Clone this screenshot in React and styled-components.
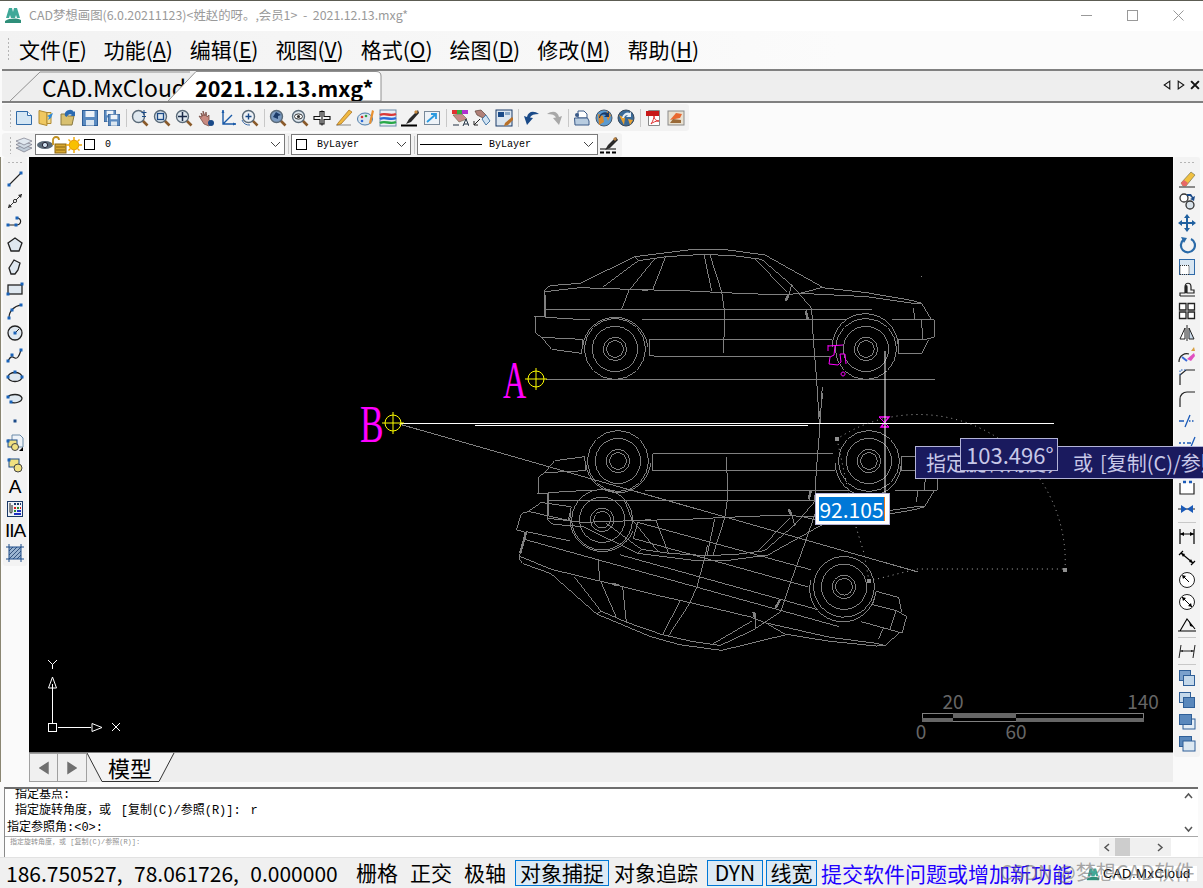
import styled, { createGlobalStyle } from 'styled-components';

const UI_FONT = '"Noto Sans CJK SC", "Noto Sans", sans-serif';
const CMD_FONT = '"Liberation Mono", "Noto Sans CJK SC", monospace';

const GlobalStyle = createGlobalStyle`
    html, body { margin: 0; padding: 0; background: #fafafa; }
`;

const Window = styled.div`
    position: relative;
    width: 1203px;
    height: 888px;
    overflow: hidden;
    display: flex;
    flex-direction: column;
    background: #fafafa;
    font-family: ${UI_FONT};
    color: #000;
    border-top: 1px solid #5c5c52;
    box-sizing: border-box;
`;

/* title bar */
const TitleBar = styled.div`
    height: 30px;
    flex: none;
    display: flex;
    align-items: center;
    box-sizing: border-box;
    background: #fff;
    padding: 0 2px 2px 4px;
`;
const TitleText = styled.span`
    margin-left: 7px;
    font-size: 12.4px;
    color: #9a9a9a;
    white-space: pre;
`;
const WinButtons = styled.div`
    margin-left: auto;
    display: flex;
`;
const WinButton = styled.div`
    width: 46px;
    height: 28px;
    display: flex;
    align-items: center;
    justify-content: center;
`;

/* menu */
const MenuBar = styled.div`
    height: 38px;
    flex: none;
    display: flex;
    align-items: center;
    gap: 17px;
    box-sizing: border-box;
    background: linear-gradient(90deg, #f2f2f2, #fbfbfb 70%);
    padding: 0 0 3px 7px;
`;
const Grip = styled.div`
    flex: none;
    width: 3px;
    height: ${p => p.$h || 18}px;
    margin-right: ${p => p.$mr || 0}px;
    background-image: radial-gradient(#b5b5b5 1px, transparent 1px);
    background-size: 3px 4px;
`;
const MenuItem = styled.span`
    font-size: 21px;
    line-height: 28px;
    white-space: nowrap;
`;

/* document tabs */
const TabStrip = styled.div`
    position: relative;
    height: 30px;
    flex: none;
    display: flex;
    align-items: flex-end;
    margin-left: 2px;
    background: #eeeeee;
    border-top: 2px solid #808080;
    border-bottom: 2px solid #808080;
`;
const DocTab = styled.div`
    position: relative;
    flex: none;
    width: ${p => p.$w}px;
    height: 30px;
    margin-left: ${p => p.$ml}px;
    padding-left: ${p => p.$pl}px;
    box-sizing: border-box;
    overflow: hidden;
    font-size: ${p => (p.$active ? 21.5 : 23)}px;
    font-weight: ${p => (p.$active ? 700 : 400)};
    line-height: 33px;
    white-space: nowrap;
    z-index: ${p => (p.$active ? 2 : 1)};
`;
const TabShape = styled.svg`
    position: absolute;
    left: 0;
    top: 0;
    z-index: -1;
`;
const TabNav = styled.div`
    position: absolute;
    right: 3px;
    top: 8px;
    display: flex;
    gap: 4px;
`;

/* horizontal toolbars */
const ToolRow = styled.div`
    height: ${p => p.$h}px;
    flex: none;
    display: flex;
    align-items: center;
    background: #fbfbfb;
    padding-left: 2px;
`;
const ToolBand = styled.div`
    height: ${p => p.$h}px;
    display: flex;
    align-items: center;
    padding: 0 2px 0 7px;
    background: #f2f2f2;
    border-radius: 3px;
`;
const Slot = styled.div`
    flex: none;
    width: 22px;
    height: 22px;
    display: flex;
    align-items: center;
    justify-content: center;
`;
const VSep = styled.div`
    flex: none;
    width: 1px;
    height: 18px;
    margin: 0 ${p => p.$m ?? 2.5}px;
    background: #c8c8c8;
`;
const Combo = styled.div`
    flex: none;
    width: ${p => p.$w}px;
    height: 21px;
    box-sizing: border-box;
    display: flex;
    align-items: center;
    background: #fff;
    border: 1px solid #7a7a7a;
    font-family: ${CMD_FONT};
    font-size: 10px;
    padding-left: ${p => p.$pl || 0}px;
`;
const Swatch = styled.div`
    flex: none;
    width: 9px;
    height: 9px;
    border: 1px solid #000;
    margin-left: ${p => p.$ml || 0}px;
    margin-right: ${p => p.$mr || 0}px;
`;
const LinePreview = styled.div`
    width: 62px;
    height: 1px;
    background: #000;
    margin-right: 7px;
`;
const Chevron = styled.svg`
    margin-left: auto;
    margin-right: 3px;
`;
const Tucked = styled.div`
    display: flex;
    margin-left: ${p => p.$ml}px;
`;

/* middle */
const Middle = styled.div`
    height: 625px;
    flex: none;
    display: flex;
`;
const LeftDock = styled.div`
    flex: none;
    width: 29px;
    padding-left: 2px;
    box-sizing: border-box;
    border-left: 1px solid #8a8672;
`;
const VBand = styled.div`
    width: ${p => p.$w}px;
    display: flex;
    flex-direction: column;
    align-items: center;
    padding: 4px 0 2px;
    background: #f3f3f3;
    border-radius: 3px;
`;
const HGrip = styled.div`
    flex: none;
    width: 16px;
    height: 3px;
    margin-bottom: 4px;
    background-image: radial-gradient(#b5b5b5 1px, transparent 1px);
    background-size: 4px 3px;
`;
const HSep = styled.div`
    flex: none;
    width: 18px;
    height: 1px;
    margin: 2px 0;
    background: #c8c8c8;
`;
const Center = styled.div`
    flex: 1;
    min-width: 0;
    display: flex;
    flex-direction: column;
`;
const Canvas = styled.svg`
    display: block;
    flex: none;
    background: #000;
    border-bottom: 1px solid #808080;
`;
const RightDock = styled.div`
    flex: none;
    width: 30px;
    padding-left: 1px;
    box-sizing: border-box;
`;
const ModelBar = styled.div`
    flex: 1;
    display: flex;
    background: #eeeeee;
`;
const PageBtn = styled.div`
    width: 29px;
    height: 29px;
    box-sizing: border-box;
    display: flex;
    align-items: center;
    justify-content: center;
    background: #f0f0f0;
    border: 1px solid #a0a0a0;
    border-left-width: ${p => (p.$first ? 1 : 0)}px;
`;
const ModelTab = styled.div`
    position: relative;
    z-index: 0;
    width: 88px;
    height: 29px;
    font-size: 22px;
    line-height: 29px;
    padding-left: 21px;
    box-sizing: border-box;
`;

/* overlays on the drawing */
const Tooltip = styled.div`
    position: absolute;
    left: 915px;
    top: 445px;
    width: 300px;
    height: 33px;
    box-sizing: border-box;
    padding-left: 10px;
    background: #1a1a5e;
    border: 1px solid #b4b4d8;
    color: #c8c8e8;
    font-size: 20px;
    line-height: 31px;
    word-spacing: 2.5px;
    white-space: pre;
    overflow: hidden;
`;
const AngleBox = styled(Tooltip)`
    left: 960px;
    top: 437px;
    width: 98px;
    height: 33px;
    padding-left: 5px;
    font-size: 22px;
`;
const DistBox = styled.div`
    position: absolute;
    left: 815px;
    top: 492px;
    width: 75px;
    height: 32px;
    box-sizing: border-box;
    padding: 3px 4px 3px 3px;
    background: #fff;
    border: 1px solid #b4b4d8;
`;
const DistSel = styled.div`
    height: 100%;
    background: #0078d7;
    border-right: 1px solid #e8761a;
    color: #fff;
    font-size: 21px;
    line-height: 24px;
    text-align: center;
`;

/* command window */
const Command = styled.div`
    height: 70px;
    flex: none;
    margin: 5px 5px 0 4px;
    display: flex;
    flex-direction: column;
    box-sizing: border-box;
    background: #fff;
    border-top: 2px solid #6e6e6e;
    border-left: 1px solid #8a8a8a;
`;
const CmdLog = styled.div`
    position: relative;
    height: 47px;
    flex: none;
    overflow: hidden;
    display: flex;
    flex-direction: column;
    justify-content: flex-end;
    padding-left: 2px;
    border-bottom: 1px solid #a8a8a8;
    font-family: ${CMD_FONT};
    font-size: 12px;
    word-spacing: 2.5px;
`;
const CmdLine = styled.div`
    flex: none;
    height: 16.5px;
    line-height: 16.5px;
    padding-left: ${p => p.$indent || 0}px;
    white-space: pre;
`;
const VScroll = styled.div`
    position: absolute;
    right: 1px;
    top: 0;
    height: 100%;
    width: 17px;
    display: flex;
    flex-direction: column;
    align-items: center;
    justify-content: space-between;
    padding: 3px 0;
    box-sizing: border-box;
`;
const CmdInput = styled.div`
    flex: 1;
    display: flex;
    justify-content: space-between;
    padding-left: 5px;
    font-family: ${CMD_FONT};
    font-size: 7px;
    line-height: 11px;
    color: #909090;
    white-space: pre;
`;
const HScroll = styled.div`
    width: 72px;
    height: 18px;
    margin: 1px 27px 0 0;
    display: flex;
    align-items: center;
    justify-content: space-between;
    padding: 0 7px 0 4px;
    box-sizing: border-box;
    background: #f0f0f0;
`;
const HThumb = styled.div`
    width: 15px;
    height: 18px;
    margin-left: 3px;
    margin-right: auto;
    background: #cdcdcd;
`;

/* status bar */
const StatusBar = styled.div`
    position: relative;
    flex: 1;
    display: flex;
    align-items: center;
    padding-left: 6px;
    background: #f0f0f0;
    border-top: 1px solid #e2e2e2;
    font-size: 21px;
    white-space: nowrap;
`;
const Coords = styled.div`
    width: 349px;
    flex: none;
    font-size: 21px;
    word-spacing: 1px;
    white-space: pre;
`;
const StatusBtn = styled.div`
    flex: none;
    height: 26px;
    box-sizing: border-box;
    width: ${p => p.$w}px;
    margin-right: ${p => p.$mr}px;
    text-align: center;
    line-height: 23px;
    border: 1px solid ${p => (p.$on ? '#0078d7' : 'transparent')};
    background: ${p => (p.$on ? '#dceaf5' : 'transparent')};
`;
const StatusLink = styled.span`
    color: #2200ff;
`;
const BrandBox = styled.div`
    position: absolute;
    left: 1083px;
    top: 8px;
    width: 114px;
    height: 15px;
    display: flex;
    align-items: center;
    gap: 3px;
    padding-left: 3px;
    box-sizing: border-box;
    background: #fff;
    font-family: "Liberation Sans", sans-serif;
    font-size: 13px;
    letter-spacing: 0.5px;
`;
const Watermark = styled.div`
    position: absolute;
    left: 1000px;
    top: -1px;
    font-size: 20px;
    color: rgba(110, 110, 110, 0.6);
`;

/* ---- small pictures ---- */
const BLUE = '#1a63b8';
const Node = ({ x, y }) => <rect x={x - 1.5} y={y - 1.5} width="3" height="3" fill={BLUE} />;
const Mag = ({ children, glass = '#dfe8ef' }) => (
    <>
        <path d="M10.5 10.5l6 6" stroke="#8a5a2a" strokeWidth="2.6" />
        <circle cx="7.5" cy="7.5" r="6" fill={glass} stroke="#5a6a78" strokeWidth="1.4" />
        {children}
    </>
);
const Floppy = ({ x = 1, y = 1, s = 16 }) => (
    <g transform={`translate(${x} ${y}) scale(${s / 16})`}>
        <rect x=".5" y=".5" width="15" height="15" fill="#5a8ac0" stroke="#2f5f98" />
        <rect x="3.5" y="1" width="9" height="6" fill="#eef3f8" />
        <rect x="4" y="10" width="8" height="5.5" fill="#dbe6f0" />
    </g>
);
const Stack = ({ back, front }) => (
    <>
        <rect x="1.5" y="1.5" width="11" height="10" fill={back} stroke="#2f5f98" />
        <rect x="5.5" y="6.5" width="11" height="10" fill={front} stroke="#2f5f98" />
    </>
);

const icons = {
    newDoc: <><path d="M1.5 2.5h11l4 4v9h-15z" fill="#d4e6f4" stroke="#2f6aa8" /><path d="M12.5 2.5v4h4" fill="#fff" stroke="#2f6aa8" /></>,
    open: <><path d="M2 1.5l8 2v13l-8-2z" fill="#f0c860" stroke="#b08a30" /><path d="M10 3.5h4v11h-4z" fill="#f6dc90" stroke="#b08a30" /><path d="M16 4l-6 3 2 1-1 3 3-2z" fill="#2f8ad8" /></>,
    open2: <><path d="M2 5h6l1 2h6l-2 9H2z" fill="#d8c070" stroke="#8a7a40" /><path d="M6 7a5 5 0 0 1 9-4l1-1v5h-5l2-1a3 3 0 0 0-5 2z" fill="#2a6ab0" /></>,
    save: <Floppy />,
    saveAll: <><Floppy x={1} y={1} s={12} /><Floppy x={5} y={5} s={12} /></>,
    zoomPm: <><Mag /><path d="M13 1v5M10.5 3.5h5M11 7.5h4" stroke="#1a4a88" /></>,
    zoomWin: <Mag><rect x="4.5" y="4.5" width="6" height="6" fill="none" stroke="#1a4a88" strokeWidth="1.3" /></Mag>,
    zoomPan: <Mag><path d="M7.5 3v9M3 7.5h9" stroke="#1a2a48" strokeWidth="1.5" /></Mag>,
    hand: <><path d="M2 7l3 1-1-4 2 3V2l2 5 1-4 1 5 2-2v5l3 3-3 3-5-2z" fill="#c88a80" stroke="#6a4038" strokeWidth=".7" /><circle cx="14" cy="14" r="3" fill="#1a4a88" /></>,
    axis: <><path d="M4 1v14h13M4 15l9-9" fill="none" stroke="#1a5aa8" strokeWidth="1.4" /><path d="M2.5 4L4 1l1.5 3zM14 13.5l3 1.5-3 1.5z" fill="#1a5aa8" /></>,
    orbit: <Mag glass="#eef2f6"><path d="M7.5 4.5v6M4.5 7.5h6" stroke="#1a4a88" strokeWidth="1.4" /><path d="M1 11a8 8 0 0 0 8 5" fill="none" stroke="#3a6aa8" /></Mag>,
    zoomPrev: <Mag glass="#7a9ac0"><path d="M4 8l3-5 5 3-3 1v3z" fill="#1a3a68" /></Mag>,
    zoomEye: <Mag><ellipse cx="7.5" cy="7.5" rx="4" ry="2.6" fill="#fff" stroke="#333" /><circle cx="7.5" cy="7.5" r="1.6" fill="#333" /></Mag>,
    cross: <path d="M9 1.5v15M7 2.5h4v5h6v3h-6v4.5H7v-4.5H1v-3h6z" fill="none" stroke="#111" strokeWidth="1.1" />,
    pencil: <><path d="M1 16h15" stroke="#888" /><path d="M3 14L14 1l3 2L6 15l-4 1z" fill="#f0b840" stroke="#a06818" strokeWidth=".7" /></>,
    palette: <><ellipse cx="8" cy="10" rx="7.5" ry="6" fill="#dce6ee" stroke="#4a7aa8" /><circle cx="5" cy="8" r="1.3" fill="#d83030" /><circle cx="9" cy="7" r="1.3" fill="#30a040" /><circle cx="5" cy="12" r="1.3" fill="#2a6ad8" /><path d="M15 1l2 1-3 13-2-1z" fill="#e89030" /></>,
    layers: <><rect x="1" y="1" width="16" height="16" fill="#e8eef4" stroke="#6a8aa8" /><path d="M1 6c5-3 10 2 16-1" fill="none" strokeWidth="2.4" stroke="#d83838" /><path d="M1 10c5-3 10 2 16-1" fill="none" stroke="#2a6ad8" strokeWidth="2.4" /><path d="M1 14c5-3 10 2 16-1" fill="none" stroke="#28a848" strokeWidth="2.4" /></>,
    brush: <><path d="M0 16.5h16" stroke="#000" strokeWidth="2" /><path d="M17 1L8 10l-3 5 5-2 8-9z" fill="#2a2a2a" /><path d="M15 1l2 2-2 2-2-2z" fill="#c88a40" /></>,
    winArrow: <><rect x="1.5" y="2.5" width="15" height="13" fill="#eef3f8" stroke="#7a8a9a" /><path d="M4 13l8-7M8 5h5v5" fill="none" stroke="#2a9ae0" strokeWidth="1.8" /></>,
    colorA: <><path d="M1 1h5v4H1z" fill="#e03030" /><path d="M6 1h5v4H6z" fill="#30b040" /><path d="M11 1h6v4h-6z" fill="#b030d0" /><path d="M2 6l9-1 5 5-8 3z" fill="#c88a88" stroke="#664" strokeWidth=".6" /><path d="M12 17l3-7 3 7M13 15h4M2 16h6" stroke="#234" fill="none" /></>,
    handArrow: <><path d="M2 2l6-1 5 5-3 3-6-3z" fill="#b08078" stroke="#5a4038" strokeWidth=".7" /><path d="M9 10l4-4 4 6-4 4z" fill="#cfe2f2" stroke="#4a7aa8" /><path d="M1 16l6-6M1 12v4h4" fill="none" stroke="#222" /></>,
    winBrush: <><rect x="1" y="1" width="16" height="16" fill="#dce6f0" stroke="#1a3a68" /><rect x="3" y="3" width="6" height="5" fill="#1a4a88" /><rect x="10" y="3" width="5" height="3" fill="#8aa8c8" /><path d="M17 8l-7 6-1 3 4-1 6-6z" fill="#b87028" /></>,
    undo: <path d="M16 5C10 1 5 3 4 8L1 7l3 9 6-7-3-.5C8 6 11 5 16 5z" fill="#1a4a88" />,
    redo: <path d="M2 5c6-4 11-2 12 3l3-1-3 9-6-7 3-.5C10 6 7 5 2 5z" fill="#a8a8a8" />,
    printer: <><path d="M5 2h6l3 3v4H5z" fill="#fff" stroke="#3a5a88" /><path d="M1.5 9h13l1.5 3v4H2z" fill="#b8cce0" stroke="#3a5a88" /><circle cx="4" cy="6" r="2" fill="#3a5a88" /></>,
    globe: <><circle cx="9" cy="9" r="8" fill="#5a9ad0" stroke="#48586a" /><path d="M3 5l5 2 1 6-5 3zM12 2l4 4-3 6-2-6z" fill="#d88a30" /><path d="M4 9a6 6 0 0 1 9-5l1-2v6h-5l2-2a4 4 0 0 0-6 3z" fill="#1a3a68" /></>,
    globe2: <><circle cx="9" cy="9" r="8" fill="#3a6a98" stroke="#38485a" /><path d="M2 6l6 3-1 7zM11 10l5 1-3 5z" fill="#e8a030" /><path d="M5 9a6 6 0 0 1 8-5l1-2v6H9l2-2a4 4 0 0 0-4 3z" fill="#e6eef6" /></>,
    pdf: <><path d="M3.5 1.5h11v15h-11z" fill="#fff" stroke="#888" /><rect x="1" y="2" width="13" height="5" fill="#c81818" /><path d="M6 15c2-3 3-6 3-8 0 3 2 5 5 5-3 0-6 1-8 3z" fill="none" stroke="#e03030" /></>,
    image: <><rect x="1" y="2" width="16" height="14" fill="#e8e0d0" stroke="#8a8a8a" /><path d="M3 11l6-7 6 1-2 4z" fill="#e86830" /><path d="M3 14l3-4 8 1v3z" fill="#9a6a38" /></>,
    line: <><path d="M3 15L15 3" stroke="#222" strokeWidth="1.1" /><Node x={3} y={15} /><Node x={15} y={3} /></>,
    dimLine: <><path d="M2 16L16 2" stroke="#333" /><path d="M2 16l1-4 3 3zM16 2l-4 1 3 3z" fill="#333" /><circle cx="9" cy="9" r="1.6" fill="#fff" stroke="#333" /></>,
    polyline: <><path d="M2 11h8c6 0 6-7 1-7" fill="none" stroke="#222" strokeWidth="1.2" /><Node x={2} y={11} /><Node x={10} y={11} /><Node x={11} y={4} /></>,
    pentagon: <path d="M9 2l7 5-3 8H5L2 7z" fill="#dfe8f0" stroke="#222" strokeWidth="1.3" />,
    irregular: <path d="M8 2l6 3-2 7-3 4H5L3 10z" fill="#dfe8f0" stroke="#222" strokeWidth="1.3" />,
    rect: <><rect x="2" y="5" width="14" height="9" fill="#dfe8f0" stroke="#222" strokeWidth="1.3" /><Node x={2} y={14} /><Node x={16} y={4} /></>,
    arc: <><path d="M3 16C3 9 8 4 15 3" fill="none" stroke="#222" strokeWidth="1.2" /><Node x={3} y={16} /><Node x={6} y={8} /><Node x={15} y={3} /></>,
    circle: <><circle cx="9" cy="9" r="7" fill="#dfe8f0" stroke="#222" strokeWidth="1.3" /><path d="M9 9l4-4" stroke="#222" /><Node x={9} y={9} /></>,
    spline: <><path d="M2 15c3-6 5-4 7-3s4-1 6-8" fill="none" stroke="#222" strokeWidth="1.2" /><Node x={2} y={15} /><Node x={6} y={9} /><Node x={15} y={4} /></>,
    ellipse: <><ellipse cx="9" cy="9" rx="7" ry="4.5" fill="#dfe8f0" stroke="#222" strokeWidth="1.3" /><Node x={9} y={4} /><Node x={2} y={9} /><Node x={16} y={9} /></>,
    ellipseArc: <><path d="M2 7c2-3 12-4 14 1 0 4-7 6-12 4" fill="#dfe8f0" stroke="#222" strokeWidth="1.3" /><Node x={2} y={7} /><Node x={5} y={12} /></>,
    point: <rect x="7.5" y="7.5" width="3" height="3" fill="#1a4a88" />,
    insert: <><path d="M6 1h8l3 3v9H6z" fill="#eef3f8" stroke="#6a8aa8" /><rect x="2" y="6" width="9" height="7" fill="#f0e080" stroke="#1a4a88" /><circle cx="9" cy="13" r="3.5" fill="#f0e080" stroke="#444" /><path d="M13 17l4-4v4z" fill="#000" /><Node x={2} y={7} /></>,
    block: <><rect x="3" y="3" width="10" height="8" fill="#f0e080" stroke="#1a4a88" /><circle cx="12" cy="12" r="4" fill="#f0e080" stroke="#444" /><Node x={3} y={4} /></>,
    table: <><rect x="1.5" y="1.5" width="15" height="15" fill="#eef3f8" stroke="#1a3a68" /><path d="M8 4h2M11 4h2M14 4h1" stroke="#1a3a68" strokeWidth="2" /><path d="M8 8h2M14 8h1" stroke="#d82020" strokeWidth="2" /><path d="M8 11h2M11 8h2" stroke="#2a8a30" strokeWidth="2" /><path d="M11 11h4M8 14h7" stroke="#2030c0" strokeWidth="2" /><path d="M4 3v9a1 1 0 0 0 2 0V5" fill="none" stroke="#222" /></>,
    hatch: <><rect x="3" y="3" width="12" height="12" fill="#9ab4d0" /><path d="M3 7l4-4M3 11l8-8M3 15L15 3M7 15l8-8M11 15l4-4" stroke="#1a3a68" strokeWidth=".8" /><path d="M0 3h18M0 15h18M3 0v18M15 0v18" stroke="#1a4a88" /></>,
    eraser: <><path d="M1 17h16" stroke="#222" /><path d="M3 13L13 2l4 3L8 16H5z" fill="#f0c040" stroke="#664" strokeWidth=".6" /><path d="M3 13l3-3 4 3-2 3H5z" fill="#e86868" /></>,
    copy: <><circle cx="6" cy="6" r="4" fill="#fff" stroke="#333" strokeWidth="1.3" /><circle cx="12" cy="13" r="4" fill="#d8e2ea" stroke="#333" strokeWidth="1.3" /><path d="M9 2h4l2 3 2-1-1 5-4-2 2-1-2-2H9z" fill="#1a4a88" /></>,
    move: <path d="M9 0l3 4h-2v4h4V6l4 3-4 3v-2h-4v4h2l-3 4-3-4h2v-4H4v2L0 9l4-3v2h4V4H6z" fill="#1f5f9f" />,
    rotate: <><path d="M6 3.5A7 7 0 1 0 13 3" fill="none" stroke="#2a6aa8" strokeWidth="2.2" /><path d="M3 1l6 1-3 5z" fill="#2a6aa8" /></>,
    scale: <><rect x="1.5" y="1.5" width="15" height="15" fill="#d8e6f2" stroke="#2f6aa8" /><rect x="2" y="7.5" width="9" height="9" fill="#fff" stroke="#333" strokeDasharray="1 1" /></>,
    stretch: <path d="M2 16v-3h5V7c0-5 6-5 6 0v3h3v3H9V7c0-2-1-2-1 0v6M2 16h15" fill="none" stroke="#222" strokeWidth="1.2" />,
    array: <path d="M1.5 1.5h6.500v6.500h-6.500zM10 1.500h6.500v6.500H10zM1.500 10h6.500v6.500h-6.500zM10 10h6.500v6.500H10z" fill="#fff" stroke="#222" strokeWidth="1.3" />,
    mirror: <><path d="M9 1v16" stroke="#222" /><path d="M7 4v11H2z" fill="#fff" stroke="#222" /><path d="M11 4v11h5z" fill="#c8d8e8" stroke="#222" /></>,
    extendBrush: <><path d="M1 16c0-7 6-9 10-8" fill="none" stroke="#222" strokeWidth="1.2" /><path d="M9 13l7-6 1 3-4 5z" fill="#e050c0" /><path d="M13 5l3-4 1 4z" fill="#d8a040" /><path d="M4 11l5 4" stroke="#3a6ad8" strokeWidth="2" /></>,
    chamfer: <><path d="M2 17V7l6-5h9" fill="none" stroke="#222" strokeWidth="1.2" /><path d="M2 7V2h6" fill="none" stroke="#1a5ab8" strokeDasharray="1.5 1.5" /></>,
    fillet: <path d="M2 17V9c0-4 3-7 7-7h8" fill="none" stroke="#222" strokeWidth="1.2" />,
    trim: <path d="M1 9h5M11 9h1.500M14 9h1.500M7 15L12 3" fill="none" stroke="#1a5ab8" strokeWidth="1.3" />,
    extend: <path d="M1 9h2M5 9h2M9 9h4M17 3l-5 12" fill="none" stroke="#1a5ab8" strokeWidth="1.3" />,
    breakPt: <><path d="M2 5v11h14V5" fill="#fff" stroke="#222" strokeWidth="1.2" /><path d="M5 4h3M11 4h3" stroke="#1a5ab8" strokeWidth="2.6" /></>,
    join: <><path d="M0 9h17" stroke="#222" /><path d="M3 5l6 4-6 4zM15 5L9 9l6 4z" fill="#1a5ab8" /></>,
    dimLinear: <><path d="M2 2v15M16 2v15" stroke="#000" strokeWidth="1.2" /><path d="M2 7h14" stroke="#000" /><path d="M2 7l4-2v4zM16 7l-4-2v4z" fill="#000" /></>,
    dimAligned: <><path d="M1 6l4-4M13 16l4-4M3 4l12 10" fill="none" stroke="#000" strokeWidth="1.2" /><path d="M3 4l4 1-2 3zM15 14l-4-1 2-3z" fill="#000" /></>,
    dimRadius: <><circle cx="9" cy="9" r="7.500" fill="#fff" stroke="#222" /><path d="M5 5l6 6" stroke="#000" /><path d="M4 4l4 1-3 3z" fill="#000" /></>,
    dimDiameter: <><circle cx="9" cy="9" r="7.500" fill="#fff" stroke="#222" /><path d="M4 4l10 10" stroke="#000" /><path d="M4 4l4 1-3 3zM14 14l-4-1 3-3z" fill="#000" /></>,
    dimAngle: <><path d="M0 16h18M2 16l7-12 8 10" fill="none" stroke="#000" strokeWidth="1.1" /><path d="M11 6l4 6-3-1z" fill="#000" /></>,
    dimSpace: <><path d="M3 3L1 16M17 3l-2 13M2 9h14" stroke="#222" fill="none" /><path d="M2 9l3-1v2zM16 9l-3-1v2z" fill="#222" /></>,
    order1: <Stack back="#7aa0cc" front="#c4d8ea" />,
    order2: <Stack back="#c4d8ea" front="#5a88bc" />,
    order3: <><rect x="5" y="6" width="12" height="10" fill="#e4edf5" stroke="#2f5f98" /><rect x="1.5" y="1.5" width="12" height="10" fill="#5a88bc" stroke="#2f5f98" /></>,
    order4: <><rect x="1.5" y="1.5" width="12" height="10" fill="#5a88bc" stroke="#2f5f98" /><rect x="5" y="6" width="12" height="10" fill="#dce8f2" stroke="#2f5f98" /></>,
    layerStack: <><path d="M9 9l8 3-8 4-8-4z" fill="#c0ccd8" stroke="#667" strokeWidth=".6" /><path d="M9 5.500l8 3-8 4-8-4z" fill="#d0dae4" stroke="#667" strokeWidth=".6" /><path d="M9 2l8 3-8 4-8-4z" fill="#e0e8f0" stroke="#667" strokeWidth=".6" /></>,
    eye: <><ellipse cx="9" cy="9" rx="8" ry="4" fill="#5a6a78" /><circle cx="9" cy="9" r="2.600" fill="#cfe0ee" stroke="#223" /></>,
    lock: <><path d="M4 9V4a3 3 0 0 1 6 0" fill="none" stroke="#c09020" strokeWidth="1.8" /><rect x="6" y="8" width="11" height="9" fill="#d8a830" stroke="#8a6410" /><path d="M7 11h9M7 14h9" stroke="#8a6410" /></>,
    sun: <><circle cx="9" cy="9" r="4.800" fill="#f8c000" stroke="#e89800" /><path d="M9 1v3M9 14v3M1 9h3M14 9h3M3.500 3.500l2 2M12.500 12.500l2 2M3.500 14.500l2-2M12.500 5.500l2-2" stroke="#f0a800" strokeWidth="1.400" /></>,
    lineWeight: <><path d="M0 16.500h4M6 16.500h4M12 16.500h4" stroke="#000" strokeWidth="2" /><path d="M0 13h16" stroke="#000" /><path d="M16 1L8 9l-3 5 5-2 8-8z" fill="#2a2a2a" /><path d="M15 1l2 2-2 2-2-2z" fill="#b88040" /></>,
};

const Ico = ({ name }) => (
    <svg width="18" height="18" viewBox="0 0 18 18">{icons[name]}</svg>
);
const Tool = ({ name }) => <Slot><Ico name={name} /></Slot>;

const TextTool = styled(Slot)`
    font-family: "Liberation Sans", sans-serif;
    font-size: 19px;
    letter-spacing: ${p => p.$ls || 0}px;
`;

const LogoMark = ({ size }) => (
    <svg width={size} height={size} viewBox="0 0 18 18">
        <path d="M1 15c5-3 11-3 16-1v3H1z" fill="#2f8f7a" />
        <path d="M2 12L5 2h3l1 4 1-4h3l3 10h-3l-1-3-1 3H7L6 9l-1 3z" fill="#3fa898" />
    </svg>
);

/* ---- the car, written in 3x coordinates of its position on the sheet ---- */
const carLines = [
    'M240 130L405 50L500 38L580 28L670 28L795 45L965 140',
    'M415 62L500 50L610 43L700 47L785 58',
    'M310 140L415 62M405 50L415 62M390 148L465 55M458 150L497 50',
    'M612 43L635 153M630 45L665 155L673 210L672 300L670 338',
    'M765 57L860 155M785 58L875 135L935 205L940 300L950 420L958 550',
    'M135 155L240 143L390 148L570 153L670 158L850 165L900 160L965 143L1100 158L1240 182',
    'M900 160L1100 170L1240 190L1265 190M1240 205L1245 240M1240 182L1265 190L1295 240',
    'M135 150L150 137L240 130M135 150L135 232M135 208L365 208L388 148',
    'M135 232L270 240M135 229L105 229L107 280L125 292L245 298M125 292L155 328L245 340L248 298',
    'M365 208L1115 208M425 240L1040 240M450 298L995 298M450 298L450 348L990 350',
    'M1175 240L1303 240L1303 292L1268 300L1195 298L1195 340L1265 340L1285 300M1265 240L1268 300',
    'M248 320A98 98 0 0 1 443 320M997 320A98 98 0 0 1 1195 320',
    'M875 135L862 180',
];
const Car = ({ id }) => (
    <g id={id} transform="translate(500 240) scale(.3333)" fill="none" stroke="#808080" strokeWidth="3" shapeRendering="crispEdges">
        {carLines.map((d, i) => <path key={i} d={d} />)}
        {[345, 1098].map(cx => (
            <g key={cx}>
                <circle cx={cx} cy="327" r="91" />
                <circle cx={cx} cy="327" r="68" />
                <circle cx={cx} cy="327" r="35" />
                <circle cx={cx} cy="327" r="25" />
            </g>
        ))}
        <path d="M135 165V230M425 150H445M856 182L866 165M917 212L924 240M958 512V530" strokeWidth="7" />
    </g>
);

const Snap = ({ x, y }) => (
    <g fill="none" stroke="#ffff00">
        <circle cx={x} cy={y} r="8" />
        <path d={`M${x - 11} ${y}H${x + 11}M${x} ${y - 11}V${y + 11}`} />
    </g>
);

const Drawing = () => (
    <Canvas width="1144" height="595" viewBox="29 157 1144 595">
        <g shapeRendering="crispEdges">
            <path d="M546 379H935M399 424L918 572" stroke="#808080" fill="none" />
            <rect x="921" y="276" width="1" height="1" fill="#808080" />
        </g>
        <Car id="car" />
        <use href="#car" transform="translate(3 810) scale(1 -1)" />
        <use href="#car" transform="translate(2.5 0) rotate(15.5 393 423) translate(3 810) scale(1 -1)" />
        <path
            d="M828 346L843 345M828 345V351M835 346L834 355L830 357L829 364L838 365L841 362L840 354L845 354L846 364M843 372a2 2 0 1 0 .1 0"
            fill="none"
            stroke="#ff00ff"
        />
        <path d="M879 417H889L881 427H889" fill="none" stroke="#ff00ff" strokeWidth="1.4" />
        <path d="M879 417L889 427" stroke="#ff00ff" />
        <path d="M400 423.500H1054M475 425.500H808M885 351V520" stroke="#fff" fill="none" />
        <path
            d="M1065 570A147 147 0 0 0 837 439M837 439L856 527L864 553L869 581L917 569H1065"
            fill="none"
            stroke="#b0b0b0"
            strokeDasharray="1 4"
        />
        <path d="M1063 568h4v4h-4zM835 437h4v4h-4zM867 579h4v4h-4z" fill="#909090" />
        <Snap x={536} y={379} />
        <Snap x={393} y={423} />
        <text transform="translate(503 398) scale(.62 1)" fill="#ff00ff" fontFamily="Liberation Serif" fontSize="52">A</text>
        <text transform="translate(360 442) scale(.68 1)" fill="#ff00ff" fontFamily="Liberation Serif" fontSize="52">B</text>

        <g fill="none" stroke="#fff">
            <path d="M52.500 723V684M58 727.500H91" />
            <rect x="48.500" y="723.500" width="8" height="8" />
            <path d="M52.500 677L48.500 688H56.500Z" />
            <path d="M92 723.500L102 727.500L92 731.500Z" />
            <path d="M48 660L52.500 664.500L57 660M52.500 664.500V669M112 723L120 731M120 723L112 731" />
        </g>

        <g shapeRendering="crispEdges">
            <rect x="922.500" y="713.500" width="221" height="8" fill="none" stroke="#808080" />
            <rect x="922" y="718" width="31" height="4" fill="#666" />
            <rect x="953" y="713" width="63" height="5" fill="#666" />
            <rect x="1016" y="718" width="128" height="4" fill="#666" />
        </g>
        <g fill="#666" fontFamily="Noto Sans CJK SC" fontSize="19" textAnchor="middle">
            <text x="953" y="709">20</text>
            <text x="1143" y="709">140</text>
            <text x="921" y="739">0</text>
            <text x="1016" y="739">60</text>
        </g>
    </Canvas>
);

const row1 = [
    ['newDoc', 'open', 'open2', 'save', 'saveAll'],
    ['zoomPm', 'zoomWin', 'zoomPan', 'hand', 'axis', 'orbit'],
    ['zoomPrev', 'zoomEye', 'cross', 'pencil', 'palette', 'layers', 'brush', 'winArrow'],
    ['colorA', 'handArrow', 'winBrush'],
    ['undo', 'redo'],
    ['printer', 'globe', 'globe2'],
    ['pdf', 'image'],
];
const leftTools = ['line', 'dimLine', 'polyline', 'pentagon', 'irregular', 'rect', 'arc', 'circle', 'spline', 'ellipse', 'ellipseArc', 'point', 'insert', 'block'];
const rightGroups = [
    ['eraser', 'copy', 'move', 'rotate', 'scale', 'stretch', 'array', 'mirror', 'extendBrush', 'chamfer', 'fillet', 'trim', 'extend', 'breakPt', 'breakPt', 'join'],
    ['dimLinear', 'dimAligned', 'dimRadius', 'dimDiameter', 'dimAngle'],
    ['dimSpace'],
    ['order1', 'order2', 'order3', 'order4'],
];
const menus = [['文件', 'F'], ['功能', 'A'], ['编辑', 'E'], ['视图', 'V'], ['格式', 'O'], ['绘图', 'D'], ['修改', 'M'], ['帮助', 'H']];
const statusBtns = [
    ['栅格', 43, 11], ['正交', 43, 11], ['极轴', 43, 9], ['对象捕捉', 94, 4, true],
    ['对象追踪', 85, 9], ['DYN', 56, 3, true], ['线宽', 51, 4, true],
];

const ChevronDown = () => (
    <Chevron width="11" height="7" viewBox="0 0 11 7"><path d="M1 1l4.500 4.500L10 1" fill="none" stroke="#444" /></Chevron>
);
const Arrow = ({ d, w = 9, h = 9, color = '#555', sw = 1.5, fill = 'none' }) => (
    <svg width={w} height={h} viewBox="0 0 9 9"><path d={d} fill={fill} stroke={color} strokeWidth={sw} /></svg>
);

const App = () => (
    <Window>
        <GlobalStyle />
        <TitleBar>
            <LogoMark size={18} />
            <TitleText>CAD梦想画图(6.0.20211123)&lt;姓赵的呀。,会员1&gt;  -  2021.12.13.mxg*</TitleText>
            <WinButtons>
                <WinButton><svg width="11" height="11"><path d="M0 5.500h11" stroke="#999" /></svg></WinButton>
                <WinButton><svg width="11" height="11"><rect x=".5" y=".5" width="10" height="10" fill="none" stroke="#999" /></svg></WinButton>
                <WinButton><svg width="11" height="11"><path d="M.5.500l10 10M10.500.500l-10 10" stroke="#999" /></svg></WinButton>
            </WinButtons>
        </TitleBar>

        <MenuBar>
            <Grip $h={24} $mr={-8} />
            {menus.map(([label, key]) => (
                <MenuItem key={key}>{label}(<u>{key}</u>)</MenuItem>
            ))}
        </MenuBar>

        <TabStrip>
            <DocTab $w={180} $ml={8} $pl={32}>
                <TabShape width="180" height="30"><path d="M0 30L30 1H180" fill="none" stroke="#909090" /></TabShape>
                CAD.MxCloud
            </DocTab>
            <DocTab $active $w={214} $ml={-22} $pl={27}>
                <TabShape width="214" height="30"><path d="M0 30L28 .5H208Q213 .5 213 5V30Z" fill="#fff" stroke="#909090" /></TabShape>
                2021.12.13.mxg*
            </DocTab>
            <TabNav>
                <Arrow w={10} h={12} d="M7 1L2 4.500L7 8Z" color="#111" sw={1} />
                <Arrow w={10} h={12} d="M2 1L7 4.500L2 8Z" color="#111" sw={1} />
                <Arrow w={10} h={12} d="M1 1L8 8M8 1L1 8" color="#111" sw={1.8} />
            </TabNav>
        </TabStrip>

        <ToolRow $h={29}>
            <ToolBand $h={27}>
                <Grip $h={18} $mr={1} />
                {row1.map((group, i) => (
                    <Slots key={i} group={group} sep={i > 0} />
                ))}
            </ToolBand>
        </ToolRow>
        <ToolRow $h={25}>
            <ToolBand $h={24}>
                <Grip $h={18} $mr={1} />
                <Tool name="layerStack" />
                <Combo $w={250}>
                    <Ico name="eye" />
                    <Tucked $ml={-5}><Ico name="lock" /></Tucked>
                    <Tucked $ml={-2}><Ico name="sun" /></Tucked>
                    <Swatch $ml={1} $mr={10} />
                    0
                    <ChevronDown />
                </Combo>
                <VSep />
                <Combo $w={120} $pl={4}>
                    <Swatch $mr={10} />
                    ByLayer
                    <ChevronDown />
                </Combo>
                <VSep />
                <Combo $w={181} $pl={2}>
                    <LinePreview />
                    ByLayer
                    <ChevronDown />
                </Combo>
                <Tool name="lineWeight" />
            </ToolBand>
        </ToolRow>

        <Middle>
            <LeftDock>
                <VBand $w={24}>
                    <HGrip />
                    {leftTools.map(n => <Tool key={n} name={n} />)}
                    <TextTool>A</TextTool>
                    <Tool name="table" />
                    <TextTool $ls={-1}>IIA</TextTool>
                    <Tool name="hatch" />
                </VBand>
            </LeftDock>
            <Center>
                <Drawing />
                <ModelBar>
                    <PageBtn $first><Arrow w={10} h={14} d="M8 0L1 4.500L8 9Z" color="#707070" fill="#707070" /></PageBtn>
                    <PageBtn><Arrow w={10} h={14} d="M1 0L8 4.500L1 9Z" color="#707070" fill="#707070" /></PageBtn>
                    <ModelTab>
                        <TabShape width="88" height="29"><path d="M0 0L15 28.500H72L87 0" fill="#f4f4f4" stroke="#333" /></TabShape>
                        模型
                    </ModelTab>
                </ModelBar>
            </Center>
            <RightDock>
                <VBand $w={26}>
                    <HGrip />
                    {rightGroups.map((group, i) => (
                        <Column key={i} group={group} sep={i > 0} />
                    ))}
                </VBand>
            </RightDock>
        </Middle>

        <Command>
            <CmdLog>
                <CmdLine $indent={8}>指定基点:</CmdLine>
                <CmdLine $indent={8}>指定旋转角度，或 [复制(C)/参照(R)]: r</CmdLine>
                <CmdLine>指定参照角:&lt;0&gt;:</CmdLine>
                <VScroll>
                    <Arrow d="M1 6l3.500-4L8 6" />
                    <Arrow d="M1 3l3.500 4L8 3" />
                </VScroll>
            </CmdLog>
            <CmdInput>
                <span>指定旋转角度，或 [复制(C)/参照(R)]:</span>
                <HScroll>
                    <Arrow d="M6 1L2 4.500L6 8" />
                    <HThumb />
                    <Arrow d="M3 1L7 4.500L3 8" />
                </HScroll>
            </CmdInput>
        </Command>

        <StatusBar>
            <Coords>186.750527,  78.061726,  0.000000</Coords>
            {statusBtns.map(([label, w, mr, on]) => (
                <StatusBtn key={label} $w={w} $mr={mr} $on={on}>{label}</StatusBtn>
            ))}
            <StatusLink>提交软件问题或增加新功能</StatusLink>
            <BrandBox><LogoMark size={14} />CAD.MxCloud</BrandBox>
            <Watermark>CSDN @梦想CAD软件</Watermark>
        </StatusBar>

        <Tooltip>指定旋转角度， 或 [复制(C)/参照(R)]</Tooltip>
        <AngleBox>103.496°</AngleBox>
        <DistBox><DistSel>92.105</DistSel></DistBox>
    </Window>
);

function Slots({ group, sep }) {
    return (
        <>
            {sep && <VSep />}
            {group.map(n => <Tool key={n} name={n} />)}
        </>
    );
}

function Column({ group, sep }) {
    return (
        <>
            {sep && <HSep />}
            {group.map((n, i) => <Tool key={n + i} name={n} />)}
        </>
    );
}

export default App;
